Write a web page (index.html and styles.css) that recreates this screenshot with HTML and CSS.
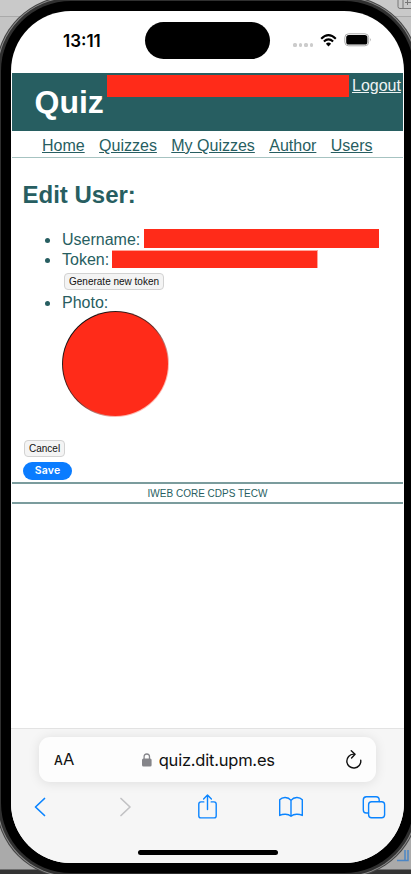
FILE: index.html
```html
<!DOCTYPE html>
<html lang="en">
<head>
<meta charset="utf-8">
<title>Quiz</title>
<link rel="stylesheet" href="styles.css">
</head>
<body>
<svg class="desk-icon desk-top" viewBox="0 0 14 10"><path d="M1 -4V6.500Q1 8.500 3 8.500H14M6 -4V8.500M8 2.500H14M10.500 -1V5" fill="none" stroke="#777"/></svg>
<svg class="desk-icon desk-bottom" viewBox="0 0 14 16"><path d="M0 12.500H11V2M8 2V12" fill="none" stroke="#4b86c6" stroke-width="1.500"/></svg>
<div class="rim"><div class="rim-light"><div class="rim-band"><div class="bezel">
<div class="screen">
  <div class="status">
    <span class="time">13:11</span>
    <span class="island"></span>
    <span class="signal"><i></i><i></i><i></i><i></i></span>
    <svg class="wifi" width="17" height="13" viewBox="0 0 17 13"><path d="M1.200 4.700Q8.500 -2.300 15.800 4.700M3.900 7.600Q8.500 3.300 13.100 7.600" fill="none" stroke="#000" stroke-width="2.100"/><path d="M5.900 9.700Q8.500 7.500 11.100 9.700L8.500 12.400Z"/></svg>
    <svg class="battery" width="28" height="14" viewBox="0 0 28 14"><rect x=".8" y=".8" width="23.900" height="12" rx="3.800" fill="none" stroke="#aaa"/><rect x="2.200" y="2.100" width="21.200" height="9.400" rx="2.600"/><path d="M26 5Q27.500 6.800 26 8.600Z" fill="#999"/></svg>
  </div>
  <div class="page">
    <header class="masthead">
      <h1>Quiz</h1>
      <span class="redact redact-account"></span>
      <a class="logout">Logout</a>
    </header>
    <nav><a>Home</a><a>Quizzes</a><a>My Quizzes</a><a>Author</a><a>Users</a></nav>
    <main>
      <h2>Edit User:</h2>
      <ul>
        <li class="row-user">Username: <span class="redact redact-user"></span></li>
        <li class="row-token">Token: <span class="redact redact-token"></span></li>
        <li class="row-action"><button class="btn">Generate new token</button></li>
        <li class="row-photo">Photo:</li>
      </ul>
      <div class="photo"></div>
      <button class="btn cancel">Cancel</button>
      <button class="save">Save</button>
    </main>
    <footer>IWEB CORE CDPS TECW</footer>
  </div>
  <div class="browser">
    <div class="address">
      <span class="aa"><small>A</small>A</span>
      <span class="url"><svg width="10" height="14" viewBox="0 0 10 14"><rect y="5.500" width="9.600" height="8" rx="1.500" fill="#85858a"/><path d="M2.100 7V3.800Q2.100 1 4.800 1T7.500 3.800V7" fill="none" stroke="#85858a" stroke-width="1.300"/></svg>quiz.dit.upm.es</span>
      <svg class="reload" width="18" height="20" viewBox="0 0 18 20"><path d="M9.800 4.100H8.500A7 7 0 1 0 15.800 10.300M6.300 .8L10.100 4.200L6.600 7.900" fill="none" stroke="#111" stroke-width="1.400" stroke-linecap="round" stroke-linejoin="round"/></svg>
    </div>
    <div class="tools">
      <svg viewBox="0 0 370 28" width="370" height="28" fill="none" stroke="#0a84ff" stroke-width="1.400" stroke-linecap="round" stroke-linejoin="round">
        <path d="M24.500 5.500L15.500 14L24.500 22.500" stroke-width="1.700"/>
        <path d="M101 5.500L110 14L101 22.500" stroke="#c2c2c4" stroke-width="1.700"/>
        <path d="M183.800 8.900H181Q178.800 8.900 178.800 11.100V22.700Q178.800 24.900 181 24.900H194Q196.200 24.900 196.200 22.700V11.100Q196.200 8.900 194 8.900H191.200M187.500 16.500V2M183.600 5.900L187.500 2L191.400 5.900"/>
        <path d="M271 7.400C268 3.600 262.500 3.600 259.700 6.800V22.500C263 20.700 268 20.700 271 23.200C274 20.700 279 20.700 282.300 22.500V6.800C279.500 3.600 274 3.600 271 7.400ZM271 7.400V23"/>
        <path d="M348.500 20H346.200Q343.300 20 343.300 17V7Q343.300 3.800 346.400 3.800H356Q359.200 3.800 359.200 7V8.500"/>
        <rect x="348.600" y="8.800" width="16" height="15.900" rx="3"/>
      </svg>
    </div>
    <div class="home-bar"></div>
  </div>
</div>
</div></div></div></div>
</body>
</html>
```
FILE: styles.css
```css
* { box-sizing: border-box; }
body {
  margin: 0;
  width: 411px;
  height: 874px;
  overflow: hidden;
  position: relative;
  background: linear-gradient(#c9c9c9 0 16px, #aaa 16px 17px, #c4c4c4 17px 50px, #aaa 800px, #aaa 869px, #333 870px);
  font-family: "Liberation Sans", Arial, sans-serif;
}
.desk-icon { position: absolute; }
.desk-top { right: 0; top: 0; width: 14px; height: 10px; }
.desk-bottom { right: 0; top: 848px; width: 14px; height: 16px; }
.rim {
  position: relative;
  width: 423px;
  height: 882px;
  margin: -4px;
  padding: 1px;
  border-radius: 75px;
  background: #444;
}
.rim-light { height: 100%; padding: 1px; border-radius: 74px; background: #8c8c8c; }
.rim-band { height: 100%; padding: 3px; border-radius: 73px; background: #303030; }
.bezel { height: 100%; padding: 10px; border-radius: 70px; background: #000; }
.screen {
  height: 852px;
  border-radius: 60px;
  overflow: hidden;
  background: #fff;
  display: flex;
  flex-direction: column;
}
.status { height: 62px; display: flex; align-items: flex-start; flex: none; }
.time {
  width: 82px;
  margin: 20px 0 0 52px;
  font: 600 17px/20px Inter, sans-serif;
  letter-spacing: 0;
}
.island { width: 125px; height: 37px; margin-top: 11px; border-radius: 19px; background: #000; }
.signal { display: flex; gap: 2px; margin: 32px 0 0 23px; }
.signal i { width: 3.5px; height: 3.5px; border-radius: 1.5px; background: #ccc; }
.wifi { margin: 23px 0 0 7px; }
.battery { margin: 22px 0 0 7px; }
.page { flex: 1; margin: 0 1px; color: #275e61; }
.masthead {
  height: 58px;
  padding-left: 22.500px;
  background: #275e61;
  color: #fff;
  display: flex;
  align-items: flex-start;
}
h1 { flex: none; margin: 11px 0 0; width: 72.500px; font-size: 32px; line-height: 36px; }
.redact { display: block; flex: none; background: #ff2b19; }
.redact-account { width: 242px; height: 22px; margin-top: 2px; }
.logout { margin: 4px 0 0 3px; font-size: 16px; line-height: 18px; color: #eef3f3; }
a { text-decoration: underline; }
nav {
  height: 27px;
  padding: 6px 0 0 30px;
  display: flex;
  gap: 14.4px;
  border-bottom: 1px solid #a6c3c1;
  font-size: 16px;
  line-height: 18px;
}
main { height: 324px; padding: 23px 0 0 11px; }
h2 { margin: 0 0 0 -.5px; font-size: 24px; line-height: 28px; }
ul { margin: 20px 0 0; padding: 0 0 0 39px; list-style: none; font-size: 16px; }
li { display: flex; align-items: flex-start; }
.row-user, .row-token, .row-photo { height: 20px; line-height: 22px; }
.row-user::before, .row-token::before, .row-photo::before {
  content: "";
  width: 5px;
  height: 5px;
  margin: 9px 12px 0 -17px;
  border-radius: 50%;
  background: #275e61;
}
.redact-user { width: 235px; height: 19px; margin: 0 0 0 3.500px; }
.redact-token { width: 206px; height: 18px; margin: 1px 0 0 3px; border-top: 1px solid #ffa59b; border-right: 1px solid #ffa59b; }
.row-action { height: 23px; padding: 4px 0 0 2px; }
.btn {
  height: 17px;
  padding: 0 4px;
  border: 1px solid #d2d2d2;
  border-radius: 4px;
  background: #f4f4f4;
  color: #111;
  font: 10px/14px "Liberation Sans", Arial, sans-serif;
  white-space: nowrap;
}
.photo {
  width: 107px;
  height: 106px;
  margin: -1px 0 0 38.500px;
  padding: 1px;
  border-radius: 50%;
  background: linear-gradient(135deg, #111 15%, #6b2a24 50%, #ffb8b0 75%);
}
.photo::before { content: ""; display: block; height: 100%; border-radius: 50%; background: #ff2b19; }
.cancel { display: block; margin: 23px 0 0 1px; }
.save {
  display: block;
  width: 49px;
  height: 18px;
  margin: 5px 0 0;
  padding: 0;
  border: 0;
  border-radius: 9px;
  background: #0a7cff;
  color: #fff;
  font: 600 10.5px/18px Inter, sans-serif;
  letter-spacing: .2px;
}
footer {
  height: 22px;
  border: solid #7b9c9d;
  border-width: 2px 0;
  text-align: center;
  font-size: 10px;
  line-height: 19px;
}
.browser { height: 135px; padding-top: 8px; border-top: 1px solid #e3e3e3; background: #f6f6f6; }
.address {
  width: 337px;
  height: 45px;
  margin-left: 28px;
  padding: 0 13px 0 15px;
  border-radius: 11px;
  background: #fdfdfd;
  box-shadow: 0 1px 12px rgba(0, 0, 0, .10);
  display: flex;
  align-items: center;
  font: 16.5px/22px Inter, sans-serif;
  color: #111;
}
.aa { width: 88.500px; padding-top: 1px; font-size: 16.5px; }
.aa small { font-size: 12.5px; font-weight: 500; }
.url { display: flex; align-items: center; gap: 6.5px; width: 203.500px; letter-spacing: -.22px; }
.tools { height: 28px; margin: 11px 0 0 9px; }
.tools svg { display: block; }
.home-bar { width: 140px; height: 5px; margin: 29px 0 0 127px; border-radius: 3px; background: #000; }
```
